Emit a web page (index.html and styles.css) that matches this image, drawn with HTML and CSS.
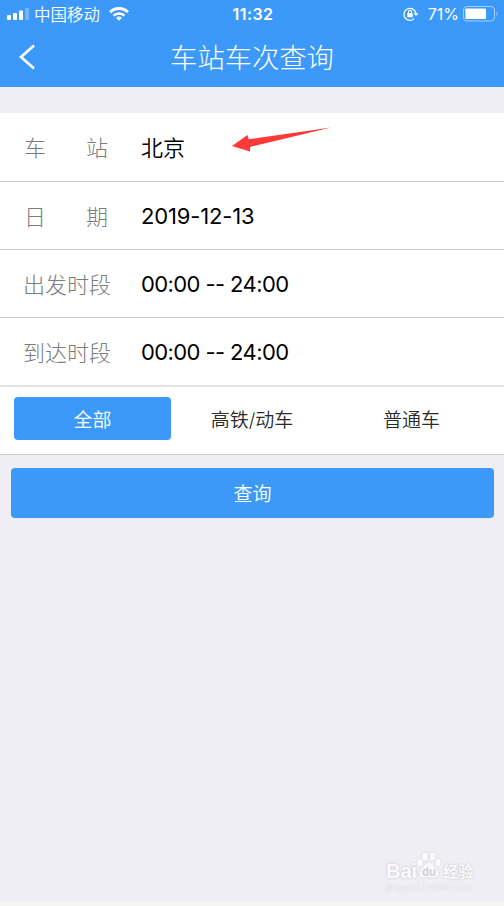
FILE: index.html
```html
<!DOCTYPE html>
<html lang="zh">
<head>
  <meta charset="UTF-8">
  <title>车站车次查询</title>
  <link rel="stylesheet" href="styles.css">
</head>
<body>

  <header class="header">
    <div class="status-bar">
      <div class="status-left">
        <svg class="signal" width="22" height="12" viewBox="0 0 22 12">
          <rect x="0" y="7" width="4" height="5" rx="1"/>
          <rect x="6" y="5" width="4" height="7" rx="1"/>
          <rect x="12" y="2.5" width="4" height="9.5" rx="1"/>
          <rect x="18" y="0" width="4" height="12" rx="1" opacity="0.3"/>
        </svg>
        <span class="carrier">中国移动</span>
        <svg class="wifi" width="20" height="14" viewBox="0 0 20 14">
          <path d="M1.2 5.2a12.2 12.2 0 0 1 17.6 0" fill="none" stroke="#fff" stroke-width="2.9"/>
          <path d="M4.5 8.7a7.7 7.7 0 0 1 11 0" fill="none" stroke="#fff" stroke-width="2.5"/>
          <path d="M10 13.8l-2.9-2.9a4.1 4.1 0 0 1 5.8 0z" fill="#fff"/>
        </svg>
      </div>
      <span class="clock">11:32</span>
      <div class="status-right">
        <svg class="lock" width="16" height="14" viewBox="0 0 16 14">
          <path d="M11.2 11.6A6 6 0 1 1 12.9 6.3" fill="none" stroke="#fff" stroke-width="1.3"/>
          <path d="M10.6 6.2h4.8L13 9z" fill="#fff"/>
          <rect x="4.3" y="6" width="5.4" height="4.2" rx="0.5" fill="#fff"/>
          <path d="M5.4 6.2V5a1.6 1.6 0 0 1 3.2 0v1.2" fill="none" stroke="#fff" stroke-width="1.1"/>
        </svg>
        <span class="percent">71%</span>
        <svg class="battery" width="36" height="16" viewBox="0 0 36 16">
          <rect x="0.5" y="0.5" width="31" height="14.5" rx="3.5" fill="none" stroke="#a5d0fb"/>
          <rect x="2.3" y="2.5" width="20.7" height="10.5" rx="1" fill="#fff"/>
          <path d="M33.5 5.3q2 2.5 0 5z" fill="#a5d0fb"/>
        </svg>
      </div>
    </div>
    <div class="nav-bar">
      <svg class="back" width="16" height="26" viewBox="0 0 16 26">
        <path d="M15 1.5L2 13l13 11.5" fill="none" stroke="#fff" stroke-width="2.7"/>
      </svg>
      <h1>车站车次查询</h1>
    </div>
  </header>

  <main>
    <div class="form">
      <div class="row">
        <div class="label spread"><span>车</span><span>站</span></div>
        <div class="value city">北京</div>
        <svg class="arrow" width="100" height="26" viewBox="0 0 100 26">
          <path d="M0 19L15.5 8l1.2 4.2L99 0.5 18 20l0 4.5z" fill="#fe3a38"/>
        </svg>
      </div>
      <div class="row">
        <div class="label spread"><span>日</span><span>期</span></div>
        <div class="value date">2019-12-13</div>
      </div>
      <div class="row">
        <div class="label">出发时段</div>
        <div class="value time">00:00 -- 24:00</div>
      </div>
      <div class="row last">
        <div class="label">到达时段</div>
        <div class="value time">00:00 -- 24:00</div>
      </div>
      <div class="tabs">
        <div class="tab active">全部</div>
        <div class="tab">高铁/动车</div>
        <div class="tab">普通车</div>
      </div>
    </div>
    <button class="submit-btn">查询</button>
  </main>

  <div class="watermark">
    <div class="wm-logo">
      <span class="wm-bai">Bai</span>
      <svg class="paw" width="26" height="29" viewBox="0 0 28 30">
        <ellipse cx="4.2" cy="12" rx="3.4" ry="4.5"/>
        <ellipse cx="9.8" cy="5.3" rx="3.6" ry="4.8"/>
        <ellipse cx="18" cy="5.3" rx="3.6" ry="4.8"/>
        <ellipse cx="23.8" cy="12" rx="3.4" ry="4.5"/>
        <path d="M14 11.5c4 0 5 4 8 6.5 4.5 4 3 10.5-2 10.5-2.5 0-4-.5-6-.5s-3.5.5-6 .5c-5 0-6.5-6.5-2-10.5 3-2.5 4-6.5 8-6.500z"/>
        <text x="14" y="26" text-anchor="middle">du</text>
      </svg>
      <span class="wm-exp">经验</span>
    </div>
    <div class="wm-url">jingyan.baidu.com</div>
  </div>

</body>
</html>
```

FILE: styles.css
```css
* {
  box-sizing: border-box;
}

body {
  margin: 0;
  height: 906px;
  display: flex;
  flex-direction: column;
  position: relative;
  overflow: hidden;
  background-color: #efeef4;
  border-bottom: 5px solid #f5f5f5;
  font-family: Inter, "Noto Sans CJK SC", sans-serif;
  font-weight: 350;
}

svg {
  display: block;
  flex-shrink: 0;
}

.header {
  height: 87px;
  background-color: #3c99fa;
  color: #fff;
}

.status-bar {
  display: grid;
  grid-template-columns: 1fr auto 1fr;
  align-items: center;
  height: 28px;
  padding: 0 5px 0 7px;
}

.status-left,
.status-right {
  display: flex;
  align-items: center;
}

.status-right {
  justify-content: flex-end;
}

.signal {
  fill: #fff;
}

.carrier {
  margin: 0 9px 0 5px;
  padding-top: 2px;
  font-size: 16.5px;
  line-height: 26px;
}

.clock {
  font-size: 16px;
  font-weight: 600;
  letter-spacing: 0.4px;
}

.percent {
  margin: 0 4px 0 9px;
  font-size: 16px;
  font-weight: 400;
}

.nav-bar {
  display: grid;
  grid-template-columns: 60px 1fr 60px;
  align-items: center;
  height: 58px;
}

.back {
  margin: 0 0 2px 19px;
}

h1 {
  margin: 0;
  padding-top: 3px;
  font-size: 27.3px;
  font-weight: 300;
  line-height: 56px;
  text-align: center;
}

.form {
  margin-top: 26px;
  background-color: #fff;
  border-bottom: 1px solid #cfcfd2;
}

.row {
  display: flex;
  align-items: center;
  position: relative;
  height: 68px;
  padding: 1px 0 0 23px;
  border-bottom: 1px solid #d0d0d0;
}

.row:first-child {
  height: 69px;
}

.last {
  height: 69px;
  border-bottom: 2px solid #e3e3e3;
}

.label {
  width: 118px;
  padding-bottom: 3px;
  color: #7c7c7c;
  font-size: 22px;
  font-weight: 300;
}

.spread {
  display: flex;
  justify-content: space-between;
  padding: 0 33px 3px 1px;
}

.value {
  color: #000;
  font-size: 22px;
  font-weight: 400;
}

.city {
  padding-bottom: 3px;
  font-weight: 350;
}

.date {
  letter-spacing: -0.15px;
}

.time {
  letter-spacing: -0.6px;
}

.arrow {
  position: absolute;
  left: 232px;
  top: 14px;
}

.tabs {
  display: grid;
  grid-template-columns: repeat(3, 157px);
  justify-content: space-between;
  height: 67px;
  padding: 10px 14px 14px;
}

.tab {
  padding-top: 4px;
  color: #2b2b2b;
  font-size: 19px;
  line-height: 39px;
  text-align: center;
}

.active {
  background-color: #3c99fa;
  border-radius: 4px;
  color: #fff;
}

.submit-btn {
  display: block;
  width: 483px;
  height: 50px;
  margin: 13px 0 0 11px;
  padding: 0 0 2px;
  border: none;
  border-radius: 4px;
  background-color: #3c99fa;
  color: #fff;
  font: inherit;
  font-size: 19px;
}

.watermark {
  position: absolute;
  left: 386px;
  top: 851px;
  width: 100px;
  color: #fbfbfd;
  text-shadow: 0 0 2px #b5b5bd;
  white-space: nowrap;
}

.wm-logo {
  display: flex;
  align-items: flex-end;
  height: 29px;
}

.wm-bai {
  font-family: "Liberation Sans", sans-serif;
  font-size: 20px;
  font-weight: 700;
  line-height: 18px;
}

.paw {
  margin: 0 1px 0 -1px;
  fill: #fbfbfd;
  stroke: #d4d4dc;
  stroke-width: 0.7;
}

.paw text {
  fill: #d0d0d8;
  stroke: none;
  font-size: 12px;
  font-weight: 700;
  text-shadow: none;
}

.wm-exp {
  font-size: 15px;
  font-weight: 700;
  line-height: 17px;
}

.wm-url {
  font-family: "Liberation Sans", sans-serif;
  font-size: 10.8px;
  line-height: 14px;
  color: #f6f6fa;
  text-shadow: 0 0 1px #c3c3cc;
}
```
